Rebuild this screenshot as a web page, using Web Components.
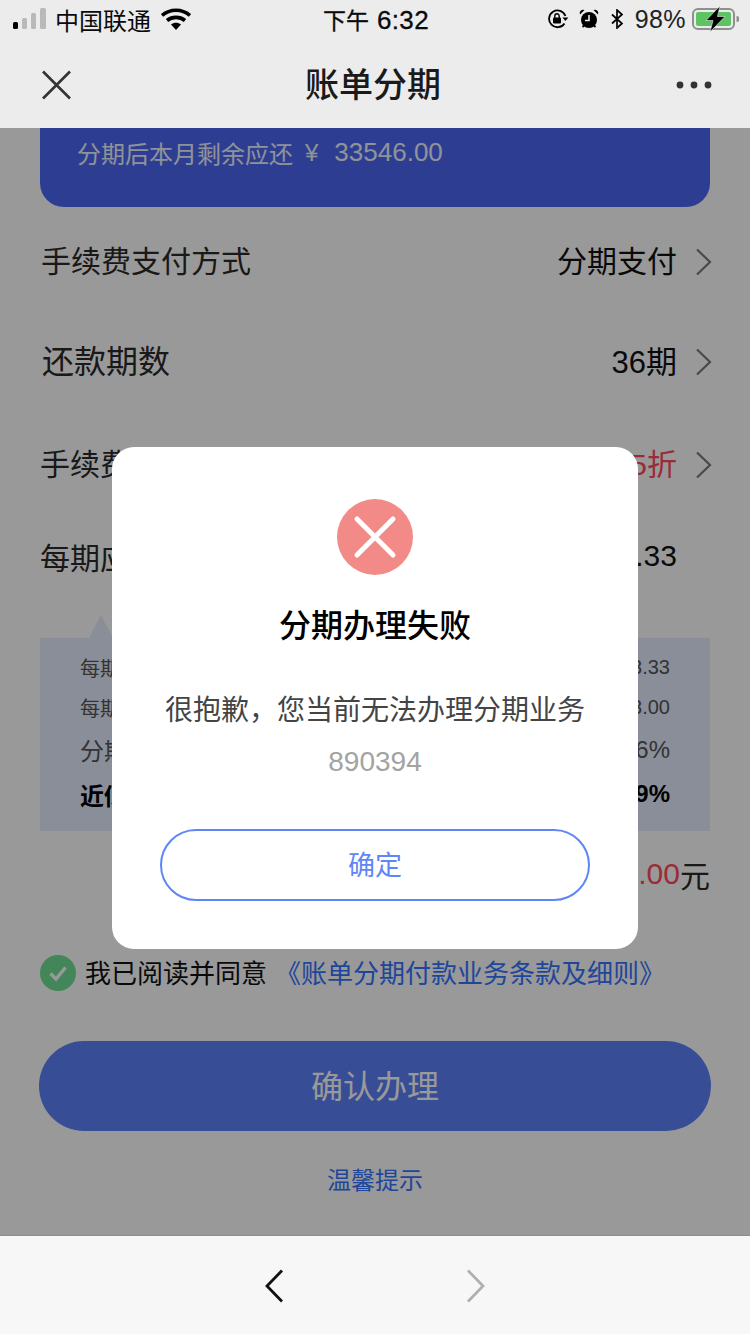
<!DOCTYPE html>
<html lang="zh">
<head>
<meta charset="utf-8">
<title>账单分期</title>
<style>
html, body { margin: 0; height: 100%; }
body {
    font-family: "Liberation Sans", "Noto Sans CJK SC", sans-serif;
    overflow: hidden;
}
app-shell { height: 1334px; }
</style>
</head>
<body>
<app-shell>
    <status-bar slot="status"></status-bar>
    <nav-bar slot="nav" title-text="账单分期"></nav-bar>

    <summary-card></summary-card>
    <list-row label="手续费支付方式" value="分期支付" arrow style="--h:100px;--top:2px;--left:41px"></list-row>
    <list-row label="还款期数" value="36期" arrow style="--h:100px;--left:42px;--fs:32px;--vfs:31px"></list-row>
    <list-row label="手续费" value="5折" arrow tone="red" style="--h:100px;--top:3px;--left:40px"></list-row>
    <list-row label="每期应" value=".33" style="--h:88px;--left:40px"></list-row>
    <rate-panel></rate-panel>
    <total-row></total-row>
    <agree-row></agree-row>
    <submit-button>确认办理</submit-button>
    <tip-link>温馨提示</tip-link>

    <fail-dialog slot="overlay"
        heading="分期办理失败"
        message="很抱歉&#xFF0C;您当前无法办理分期业务"
        code="890394"
        action="确定"></fail-dialog>

    <bottom-bar slot="bottom"></bottom-bar>
</app-shell>

<script>
class AppShell extends HTMLElement {
    constructor() {
        super();
        this.attachShadow({ mode: 'open' });
    }

    connectedCallback() {
        this.shadowRoot.innerHTML = `
        <style>
            :host { display: flex; flex-direction: column; width: 750px; }
            .top { background: #ececec; height: 128px; flex: none; }
            main {
                position: relative;
                flex: 1;
                min-height: 0;
                overflow: hidden;
                background: #fff;
            }
            .mask {
                position: absolute;
                inset: 0;
                background: rgba(0, 0, 0, .4);
                display: flex;
                justify-content: center;
                align-items: flex-start;
                padding-top: 319px;
            }
        </style>
        <div class="top">
            <slot name="status"></slot>
            <slot name="nav"></slot>
        </div>
        <main>
            <slot></slot>
            <div class="mask"><slot name="overlay"></slot></div>
        </main>
        <slot name="bottom"></slot>
        `;
    }
}

class StatusBar extends HTMLElement {
    constructor() {
        super();
        this.attachShadow({ mode: 'open' });
    }

    connectedCallback() {
        this.shadowRoot.innerHTML = `
        <style>
            :host {
                display: grid;
                grid-template-columns: 1fr auto 1fr;
                align-items: center;
                box-sizing: border-box;
                height: 41px;
                padding: 0 11px 3px 13px;
                color: #0a0a0a;
                font-size: 24px;
            }
            .side { display: flex; align-items: center; }
            .right { justify-content: flex-end; }
            .carrier { margin-left: 9px; }
            .wifi { margin-left: 10px; }
            .time { font-size: 26px; letter-spacing: .4px; -webkit-text-stroke: .3px #0a0a0a; }
            .time span { font-size: 23px; letter-spacing: 0; margin-right: 8px; }
            .pct { font-size: 25px; margin: 0 6px 0 12px; color: #222; letter-spacing: .4px; }
            svg { display: block; flex: none; }
        </style>
        <div class="side">
            <svg width="33" height="22" viewBox="0 0 33 22">
                <rect x="0" y="14" width="5" height="7" rx="1.5" fill="#000"/>
                <rect x="9" y="10" width="5" height="11" rx="1.5" fill="#b9b9b9"/>
                <rect x="18" y="5" width="5" height="16" rx="1.5" fill="#b9b9b9"/>
                <rect x="27" y="0" width="6" height="21" rx="1.5" fill="#b9b9b9"/>
            </svg>
            <span class="carrier">中国联通</span>
            <svg class="wifi" width="30" height="22" viewBox="0 0 30 22">
                <path d="M1 7.5C9 .5 21 .5 29 7.5" fill="none" stroke="#000" stroke-width="3.6"/>
                <path d="M6 12.5C11 8.4 19 8.4 24 12.5" fill="none" stroke="#000" stroke-width="3.6"/>
                <path d="M10 16.6C13 14 17 14 20 16.6L15 22Z" fill="#000"/>
            </svg>
        </div>
        <div class="time"><span>下午</span>6:32</div>
        <div class="side right">
            <svg width="22" height="20" viewBox="0 0 22 20">
                <path d="M17.5 14.5A8.4 8.4 0 1 1 18.4 7" fill="none" stroke="#000" stroke-width="1.8"/>
                <path d="M15.4 8.4h6l-3 3.6Z" fill="#000"/>
                <rect x="6" y="8.5" width="8" height="6" rx="1" fill="#000"/>
                <path d="M7.8 9V7a2.2 2.2 0 0 1 4.4 0v2" fill="none" stroke="#000" stroke-width="1.4"/>
            </svg>
            <svg style="margin-left:10px" width="20" height="20" viewBox="0 0 20 20">
                <circle cx="10" cy="11" r="8" fill="#000"/>
                <path d="M1 5.5A3.4 3.4 0 0 1 5.5 1ZM19 5.5A3.4 3.4 0 0 0 14.5 1Z" fill="#000"/>
                <path d="M3.5 18l2-2M16.5 18l-2-2" stroke="#000" stroke-width="1.8"/>
                <path d="M10 6v5.5H6" fill="none" stroke="#ececec" stroke-width="1.6"/>
            </svg>
            <svg style="margin-left:12px" width="12" height="20" viewBox="0 0 12 20">
                <path d="M1 5.5L11 14.5 6 19V1L11 5.5 1 14.5" fill="none" stroke="#000" stroke-width="1.7"/>
            </svg>
            <span class="pct">98%</span>
            <svg width="47" height="26" viewBox="0 0 47 26">
                <rect x="1" y="3" width="41" height="20" rx="5" fill="none" stroke="#8f8f8f" stroke-width="2"/>
                <rect x="4" y="6" width="35" height="14" rx="2" fill="#5cc463"/>
                <path d="M44.5 10v6a3 3 0 0 0 0-6Z" fill="#8f8f8f"/>
                <path d="M28 0L14 14.5h7L18 26 33 10.5h-7.6Z" fill="#000" stroke="#ececec" stroke-width=".6"/>
            </svg>
        </div>
        `;
    }
}

class NavBar extends HTMLElement {
    constructor() {
        super();
        this.attachShadow({ mode: 'open' });
    }

    connectedCallback() {
        this.shadowRoot.innerHTML = `
        <style>
            :host {
                display: flex;
                align-items: center;
                justify-content: space-between;
                height: 87px;
                padding: 0 38px 0 41px;
            }
            h1 {
                margin: 0 2px 4px 0;
                font-size: 34px;
                font-weight: 500;
                color: #1a1a1a;
            }
            svg { display: block; }
        </style>
        <svg width="31" height="30" viewBox="0 0 31 30">
            <path d="M2 1.5L29 28.5M29 1.5L2 28.5" stroke="#333" stroke-width="2.6" fill="none"/>
        </svg>
        <h1>${this.getAttribute('title-text')}</h1>
        <svg width="36" height="10" viewBox="0 0 36 10">
            <circle cx="4" cy="5" r="3.4" fill="#333"/>
            <circle cx="18" cy="5" r="3.4" fill="#333"/>
            <circle cx="32" cy="5" r="3.4" fill="#333"/>
        </svg>
        `;
    }
}

class SummaryCard extends HTMLElement {
    constructor() {
        super();
        this.attachShadow({ mode: 'open' });
    }

    connectedCallback() {
        this.shadowRoot.innerHTML = `
        <style>
            :host {
                display: flex;
                align-items: center;
                box-sizing: border-box;
                height: 79px;
                margin: 0 40px;
                padding: 0 37px 30px;
                background: #4b67f3;
                border-radius: 0 0 24px 24px;
                color: #eff4ff;
                font-size: 24px;
            }
            .yen { margin-left: 12px; }
            .amount { margin-left: 16px; font-size: 26px; }
        </style>
        <span>分期后本月剩余应还</span>
        <span class="yen">¥</span>
        <span class="amount">33546.00</span>
        `;
    }
}

class ListRow extends HTMLElement {
    constructor() {
        super();
        this.attachShadow({ mode: 'open' });
    }

    connectedCallback() {
        const arrow = this.hasAttribute('arrow');
        const red = this.getAttribute('tone') === 'red';
        this.shadowRoot.innerHTML = `
        <style>
            :host {
                display: flex;
                align-items: center;
                height: var(--h, 100px);
                margin-top: var(--top, 0);
                padding: 0 38px 0 var(--left, 40px);
                font-size: var(--fs, 30px);
                color: #2a2a2a;
            }
            .value { margin-left: auto; font-size: var(--vfs, 30px); color: ${red ? '#ff4a5e' : '#111'}; }
            .spacer { width: 35px; flex: none; display: flex; justify-content: flex-end; }
            svg { display: block; margin-top: 6px; }
        </style>
        <span>${this.getAttribute('label')}</span>
        <span class="value">${this.getAttribute('value')}</span>
        <span class="spacer">${arrow ? `
            <svg width="17" height="28" viewBox="0 0 17 28">
                <path d="M2 1.5L15 14 2 26.5" fill="none" stroke="#7a7a7a" stroke-width="2.2"/>
            </svg>` : ''}</span>
        `;
    }
}

class RatePanel extends HTMLElement {
    constructor() {
        super();
        this.attachShadow({ mode: 'open' });
    }

    connectedCallback() {
        this.shadowRoot.innerHTML = `
        <style>
            :host {
                position: relative;
                display: flex;
                flex-direction: column;
                box-sizing: border-box;
                height: 193px;
                margin: 38px 40px 0;
                padding: 9px 40px 0;
                background: #e6edff;
                color: #555;
                font-size: 20px;
            }
            :host::before {
                content: "";
                position: absolute;
                left: 49px;
                top: -23px;
                border: solid transparent;
                border-width: 0 12px 23px;
                border-bottom-color: #e6edff;
            }
            .row { display: flex; justify-content: space-between; align-items: center; height: 40px; }
            .big { font-size: 24px; height: 45px; }
            .bold { font-size: 24px; height: 44px; font-weight: 700; color: #000; }
        </style>
        <div class="row"><span>每期</span><span>3.33</span></div>
        <div class="row"><span>每期</span><span>3.00</span></div>
        <div class="row big"><span>分期</span><span>6%</span></div>
        <div class="row bold"><span>近似</span><span>9%</span></div>
        `;
    }
}

class TotalRow extends HTMLElement {
    constructor() {
        super();
        this.attachShadow({ mode: 'open' });
    }

    connectedCallback() {
        this.shadowRoot.innerHTML = `
        <style>
            :host {
                display: flex;
                justify-content: flex-end;
                align-items: center;
                height: 86px;
                padding-right: 40px;
                font-size: 30px;
                color: #2a2a2a;
            }
            .num { color: #ff4a5e; }
        </style>
        <span class="num">.00</span><span>元</span>
        `;
    }
}

class AgreeRow extends HTMLElement {
    constructor() {
        super();
        this.attachShadow({ mode: 'open' });
    }

    connectedCallback() {
        this.shadowRoot.innerHTML = `
        <style>
            :host {
                display: flex;
                align-items: center;
                height: 36px;
                margin: 38px 0 0 40px;
                font-size: 26px;
                color: #111;
            }
            svg { display: block; flex: none; margin-right: 9px; }
            span { margin-bottom: 4px; }
            .link { color: #3476ff; margin-left: 8px; white-space: nowrap; }
        </style>
        <svg width="36" height="36" viewBox="0 0 36 36">
            <circle cx="18" cy="18" r="18" fill="#6fe096"/>
            <path d="M10.5 18.5L16 24 25.5 12.5" fill="none" stroke="#fff" stroke-width="3.4"/>
        </svg>
        <span>我已阅读并同意</span>
        <span class="link">《账单分期付款业务条款及细则》</span>
        `;
    }
}

class SubmitButton extends HTMLElement {
    constructor() {
        super();
        this.attachShadow({ mode: 'open' });
    }

    connectedCallback() {
        this.shadowRoot.innerHTML = `
        <style>
            :host {
                display: flex;
                align-items: center;
                justify-content: center;
                box-sizing: border-box;
                height: 90px;
                margin: 50px 39px 0;
                padding-bottom: 4px;
                background: #5c80fa;
                border-radius: 45px;
                color: #fff;
                font-size: 32px;
            }
        </style>
        <slot></slot>
        `;
    }
}

class TipLink extends HTMLElement {
    constructor() {
        super();
        this.attachShadow({ mode: 'open' });
    }

    connectedCallback() {
        this.shadowRoot.innerHTML = `
        <style>
            :host {
                display: block;
                margin-top: 32px;
                text-align: center;
                font-size: 24px;
                line-height: 36px;
                color: #3476ff;
            }
        </style>
        <slot></slot>
        `;
    }
}

class FailDialog extends HTMLElement {
    constructor() {
        super();
        this.attachShadow({ mode: 'open' });
    }

    connectedCallback() {
        this.shadowRoot.innerHTML = `
        <style>
            :host {
                display: flex;
                flex-direction: column;
                align-items: center;
                box-sizing: border-box;
                width: 526px;
                height: 502px;
                padding-top: 52px;
                background: #fff;
                border-radius: 22px;
            }
            svg { display: block; }
            h2 {
                margin: 28px 0 0;
                font-size: 32px;
                line-height: 46px;
                font-weight: 500;
                color: #000;
            }
            .msg { margin-top: 40px; font-size: 28px; line-height: 44px; color: #444; }
            .code { margin-top: 7px; font-size: 28px; line-height: 44px; color: #a3a3a3; }
            button {
                box-sizing: border-box;
                width: 430px;
                height: 72px;
                margin-top: 45px;
                padding: 0 0 3px;
                background: #fff;
                border: 2px solid #5f86f5;
                border-radius: 36px;
                color: #5f86f5;
                font: inherit;
                font-size: 27px;
            }
        </style>
        <svg width="76" height="76" viewBox="0 0 76 76">
            <circle cx="38" cy="38" r="38" fill="#f28b88"/>
            <path d="M20 20L56 56M56 20L20 56" stroke="#fff" stroke-width="5" stroke-linecap="round"/>
        </svg>
        <h2>${this.getAttribute('heading')}</h2>
        <div class="msg">${this.getAttribute('message')}</div>
        <div class="code">${this.getAttribute('code')}</div>
        <button>${this.getAttribute('action')}</button>
        `;
    }
}

class BottomBar extends HTMLElement {
    constructor() {
        super();
        this.attachShadow({ mode: 'open' });
    }

    connectedCallback() {
        this.shadowRoot.innerHTML = `
        <style>
            :host {
                display: flex;
                align-items: center;
                justify-content: center;
                gap: 182px;
                box-sizing: border-box;
                height: 99px;
                padding-top: 2px;
                background: #f7f7f7;
                border-top: 1px solid #8c8c8c;
            }
            svg { display: block; }
        </style>
        <svg width="20" height="34" viewBox="0 0 20 34">
            <path d="M18 1.5L3 17 18 32.5" fill="none" stroke="#111" stroke-width="2.8"/>
        </svg>
        <svg width="20" height="34" viewBox="0 0 20 34">
            <path d="M2 1.5L17 17 2 32.5" fill="none" stroke="#b0b0b0" stroke-width="2.8"/>
        </svg>
        `;
    }
}

customElements.define('app-shell', AppShell);
customElements.define('status-bar', StatusBar);
customElements.define('nav-bar', NavBar);
customElements.define('summary-card', SummaryCard);
customElements.define('list-row', ListRow);
customElements.define('rate-panel', RatePanel);
customElements.define('total-row', TotalRow);
customElements.define('agree-row', AgreeRow);
customElements.define('submit-button', SubmitButton);
customElements.define('tip-link', TipLink);
customElements.define('fail-dialog', FailDialog);
customElements.define('bottom-bar', BottomBar);
</script>
</body>
</html>
